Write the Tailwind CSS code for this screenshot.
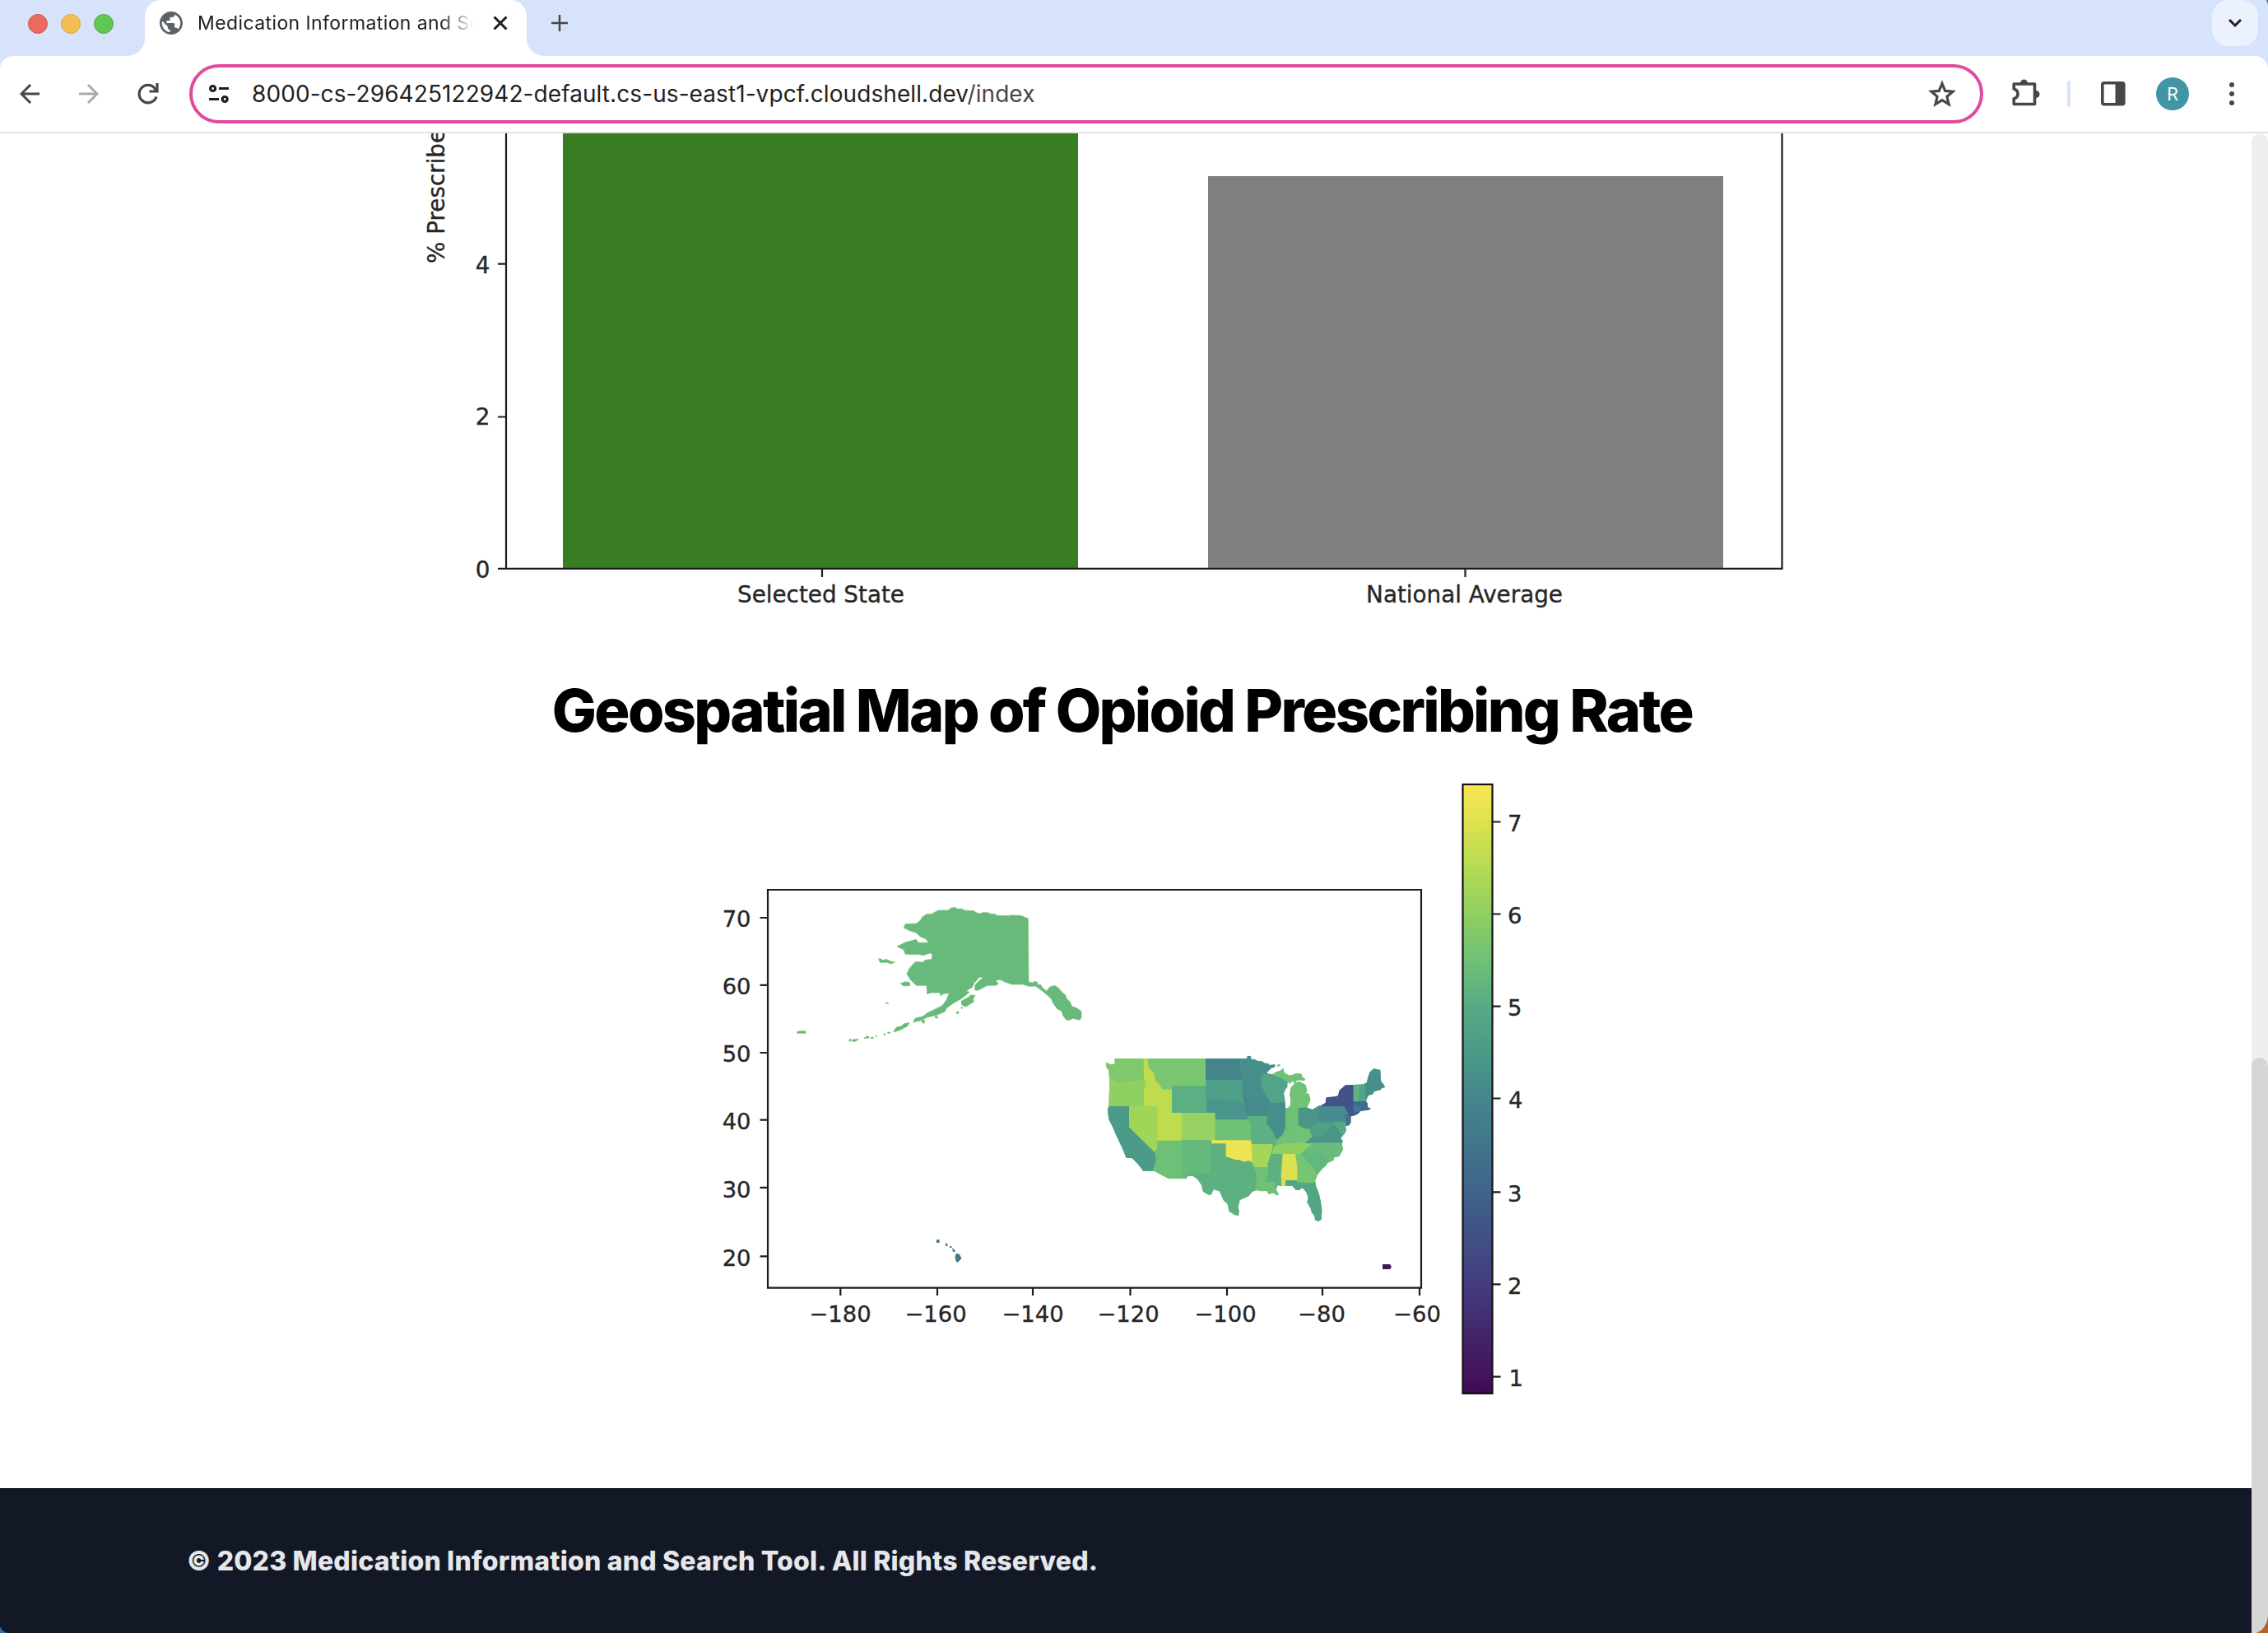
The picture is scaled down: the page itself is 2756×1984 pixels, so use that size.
<!DOCTYPE html>
<html lang="en">
<head>
<meta charset="utf-8">
<title>Medication Information and Search Tool</title>
<script src="https://cdn.jsdelivr.net/npm/@tailwindcss/browser@4"></script>
</head>
<body class="bg-white">
<div class="relative flex h-[1984px] w-[2756px] flex-col overflow-hidden bg-white font-['Inter',sans-serif]">

  <!-- Tab strip -->
  <div class="flex h-[68px] shrink-0 bg-[#d7e2fb]">
    <div class="flex w-[152px] items-start gap-4 pl-[34px] pt-[17px]">
      <span class="size-6 shrink-0 rounded-full border border-[#d5564c] bg-[#ec695e]"></span>
      <span class="size-6 shrink-0 rounded-full border border-[#dba53c] bg-[#f4bf50]"></span>
      <span class="size-6 shrink-0 rounded-full border border-[#52ab44] bg-[#62c655]"></span>
    </div>
    <svg class="h-[68px] w-6 shrink-0" viewBox="0 0 24 68"><path d="M0 68C14 68 24 60 24 46V20L24 68Z" fill="#fff"/></svg>
    <div class="flex w-[464px] shrink-0 items-start rounded-t-[20px] bg-white pl-[18px]">
      <svg class="mt-[14px] size-7 shrink-0" viewBox="2 2 20 20" fill="#5f6368"><path d="M12 2C6.48 2 2 6.48 2 12s4.48 10 10 10 10-4.48 10-10S17.52 2 12 2zm-1 17.93c-3.95-.49-7-3.85-7-7.93 0-.62.08-1.21.21-1.79L9 15v1c0 1.1.9 2 2 2v1.93zm6.9-2.54c-.26-.81-1-1.39-1.9-1.39h-1v-3c0-.55-.45-1-1-1H8v-2h2c.55 0 1-.45 1-1V7h2c1.1 0 2-.9 2-2v-.41c2.93 1.19 5 4.06 5 7.41 0 2.08-.8 3.97-2.1 5.39z"/></svg>
      <div class="ml-[18px] mt-3 w-[335px] overflow-hidden whitespace-nowrap text-[23px] leading-8 tracking-[0.400px] text-[#1f1f1f] [mask-image:linear-gradient(to_right,#000_88%,transparent)]">Medication Information and Search Tool</div>
      <svg class="ml-[24px] mt-[19px] size-[18px] shrink-0" viewBox="0 0 18 18" stroke="#1f1f1f" stroke-width="3"><path d="M1.5 1.5L16.5 16.5M16.5 1.5L1.5 16.5"/></svg>
    </div>
    <svg class="h-[68px] w-6 shrink-0" viewBox="0 0 24 68"><path d="M24 68C10 68 0 60 0 46V20V68Z" fill="#fff"/></svg>
    <svg class="ml-[6px] mt-[18px] size-5 shrink-0" viewBox="0 0 20 20" stroke="#474747" stroke-width="2.5"><path d="M0 10H20M10 0V20"/></svg>
    <div class="ml-auto mr-3 flex size-14 items-center justify-center rounded-[20px] bg-[#ecf2fd]">
      <svg class="size-5" viewBox="0 0 20 20" fill="none" stroke="#1f1f1f" stroke-width="3"><path d="M3 6L10 13L17 6"/></svg>
    </div>
  </div>

  <!-- Toolbar -->
  <div class="flex h-[94px] shrink-0 items-center border-b-2 border-[#e1e1e1] bg-[#d7e2fb]">
   <div class="flex h-full w-full items-center rounded-t-2xl bg-white">
    <svg class="ml-6 size-6 shrink-0" viewBox="0 0 24 24" fill="none" stroke="#474747" stroke-width="3"><path d="M24 12H3M13 1L2 12L13 23"/></svg>
    <svg class="ml-[48px] size-6 shrink-0" viewBox="0 0 24 24" fill="none" stroke="#ababab" stroke-width="3"><path d="M0 12H21M11 1L22 12L11 23"/></svg>
    <svg class="ml-[47px] size-[26px] shrink-0" viewBox="0 0 26 26" fill="none" stroke="#474747" stroke-width="3.2"><path d="M23 16.5A10.7 10.7 0 1 1 21 6.2L23 9"/><path d="M24 0V10H14.5"/></svg>
    <div class="ml-[37px] flex h-[72px] w-[2180px] shrink-0 items-center rounded-full border-4 border-[#e04b9d] bg-white pl-5">
      <svg class="size-6 shrink-0" viewBox="0 0 24 24" fill="none" stroke="#1f1f1f" stroke-width="3.2"><circle cx="4.6" cy="5.5" r="3"/><path d="M12 5.5H24M0 18.5H12"/><circle cx="19.2" cy="18.5" r="3"/></svg>
      <div class="ml-[28px] whitespace-nowrap text-[28px] leading-10 tracking-[0.080px] text-[#1f1f1f]">8000-cs-296425122942-default.cs-us-east1-vpcf.cloudshell.dev<span class="text-[#474747]">/index</span></div>
      <svg class="ml-auto mr-[28px] size-9 shrink-0" viewBox="0 0 36 36" fill="none" stroke="#474747" stroke-width="3.2"><path d="M18 5.5L21.7 14.4L31 15.2L23.9 21.4L26.1 30.6L18 25.7L9.9 30.6L12.1 21.4L5 15.2L14.3 14.4Z"/></svg>
    </div>
    <svg class="ml-[34px] size-9 shrink-0" viewBox="0 0 36 36"><path d="M4 6H28.5V30.5H3.2V24C6.5 23 8 21 8 18S6.500 13 3.200 12V6Z" fill="none" stroke="#474747" stroke-width="3.6" stroke-linejoin="round"/><path d="M11 5A4.500 4.500 0 0 1 20 5ZM30 14A4.500 4.500 0 0 1 30 23Z" fill="#474747"/></svg>
    <div class="ml-[32px] h-8 w-1 rounded-full bg-[#d7e2fb]"></div>
    <svg class="ml-[37px] h-[30px] w-[30px] shrink-0" viewBox="0 0 30 30"><rect x="1.800" y="1.800" width="26" height="26" rx="2" fill="none" stroke="#474747" stroke-width="3.600"/><path d="M17.500 1H28V29H17.500Z" fill="#474747"/></svg>
    <div class="ml-[37px] flex size-10 items-center justify-center rounded-full bg-[#4295a5] font-['Roboto',sans-serif] text-[22px] text-white">R</div>
    <div class="ml-[49px] flex flex-col gap-[5px]"><span class="size-1.5 rounded-full bg-[#474747]"></span><span class="size-1.5 rounded-full bg-[#474747]"></span><span class="size-1.5 rounded-full bg-[#474747]"></span></div>
   </div>
  </div>

  <!-- Page -->
  <div class="flex min-h-0 flex-1">
    <div class="flex w-[2736px] shrink-0 flex-col items-center">
      <!-- Prescribing rate bar chart -->
      <svg class="h-[661px] w-[1736px] shrink-0 font-['DejaVu_Sans',sans-serif] text-[27.8px]" viewBox="500 162 1736 661" fill="#262626">
        <rect x="684" y="100" width="626" height="591" fill="#387d22"/>
        <rect x="1468" y="214" width="626" height="477" fill="#808080"/>
        <path d="M615 100V690.800H2165.500V100M605 320.700H615M605 506.500H615M605 690.800H615M999 691V701M1780.500 691V701" fill="none" stroke="#1c1c1c" stroke-width="2.200"/>
        <g stroke="#262626" stroke-width=".35">
          <g text-anchor="end"><text x="595.500" y="331.500">4</text><text x="595.500" y="516">2</text><text x="595.500" y="701.500">0</text></g>
          <g text-anchor="middle"><text x="997.500" y="731.500">Selected State</text><text x="1779.500" y="731.500">National Average</text></g>
          <text transform="translate(540 320) rotate(-90)">% Prescribed</text>
        </g>
      </svg>

      <h2 class="h-20 shrink-0 whitespace-nowrap pr-[9px] text-[72px] font-extrabold leading-[80px] tracking-[-2.700px] text-black">Geospatial Map of Opioid Prescribing Rate</h2>

      <!-- Choropleth map -->
      <svg class="h-[905px] w-[1000px] shrink-0 font-['DejaVu_Sans',sans-serif] text-[27.4px]" viewBox="868 903 1000 905" fill="#262626">
        <defs>
          <linearGradient id="viridis" x1="0" y1="0" x2="0" y2="1">
            <stop offset="0" stop-color="#fae655"/><stop offset=".062" stop-color="#dde24e"/><stop offset=".137" stop-color="#b5da53"/><stop offset=".213" stop-color="#8fcf61"/><stop offset=".289" stop-color="#6fc077"/><stop offset=".365" stop-color="#57ab84"/><stop offset=".44" stop-color="#4b9a89"/><stop offset=".516" stop-color="#44868c"/><stop offset=".67" stop-color="#3f638b"/><stop offset=".821" stop-color="#433c7e"/><stop offset=".973" stop-color="#43125a"/><stop offset="1" stop-color="#3f0a50"/>
          </linearGradient>
          <clipPath id="lower48"><path d="M12 62L28 70 44 68V48H525L528 38H540L541 50 555 52 565 57 580 58 590 65 603 66 608 72 628 70 628 78 615 84 600 97 600 103 618 106 635 96 645 94 658 84 662 100 680 110 690 108 705 103 725 104 728 116 738 122 735 129 718 127 704 129 704 137 697 137 695 130 680 140 675 133 672 145 675 148 665 162 660 175 664 200 666 228H675L684 220 685 200 682 178 685 155 695 145 700 138 712 132 722 134 740 145 745 165 740 175 735 182 745 173 753 180 757 200 750 215 745 228 765 234 785 222 800 217 812 210 815 190 845 187 858 184 862 165 885 145 915 144 950 142 963 135 966 120 973 98 988 85 1012 90 1014 130 1022 140 1030 152 1018 156 1012 163 990 168 985 178 970 182 962 195 960 205 966 212 966 226 978 230 968 236 955 238 940 240 932 250 922 256 905 258 905 280 898 292 885 295 888 310 880 325 875 330 867 338 875 348 872 360 876 380 862 405 845 407 840 420 820 428 812 440 800 450 783 472 774 495 778 515 788 540 795 570 799 600 797 635 785 642 774 637 772 622 762 610 758 595 745 572 749 555 742 535 728 520 715 528 705 528 690 512 665 512 652 514 638 510 632 525 642 545 630 545 625 538 605 542 598 530 580 532 560 528 545 535 532 550 500 565 494 592 498 605 495 622 480 618 460 605 455 580 440 565 425 532 405 526 395 545 385 545 365 533 360 510 345 488 328 476 308 478 305 486H240L210 470 188 458H148L130 435 108 412 86 410 70 372 50 330 35 295 22 270 18 235 22 220 25 130 22 90 14 82Z"/></clipPath>
        </defs>

        <!-- Alaska -->
        <g transform="translate(1050 1080) scale(.33333)" fill="#67ba7b" stroke="#74c272" stroke-width="2">
          <path d="M320 68L335 68 340 73 360 73 362 78 400 80 412 88 425 90 432 86 453 86 458 91 480 92 483 97 525 98 535 96 570 97 598 108 600 340 618 342 620 337 632 340 632 348 645 350 650 360 665 372 678 357 695 352 710 362 720 375 735 388 738 400 750 410 758 428 775 434 792 446 792 470 785 478 760 472 750 478 738 478 725 462 720 445 705 438 690 418 682 400 665 385 650 372 625 354 600 355 580 348 540 348 515 340 495 330 480 335 490 345 480 352 450 352 430 362 415 370 403 368 405 350 418 336 435 321 420 322 400 345 395 358 372 372 384 376 370 388 355 400 328 415 300 435 295 447 265 460 230 468 205 480 178 486 186 472 215 464 230 452 255 440 285 425 300 405 310 380 290 382 280 389 275 378 245 378 230 383 228 352 190 352 170 332 156 310 165 290 180 272 190 265 215 268 220 260 247 256 248 236 240 234 215 242 205 239 150 238 145 222 120 210 150 195 190 184 197 196 235 196 225 182 205 174 190 160 168 153 145 142 150 128 190 126 205 115 212 103 228 92 245 92 270 78 305 78Z"/>
          <path d="M355 408L380 395 388 387 405 388 398 400 400 412 385 420 370 430 356 422ZM53 254L64 256 68 260 80 256 98 264 112 267 96 274 88 268 58 268ZM132 345L150 338 167 341 167 353 145 354ZM79 415H88V418H79ZM108 518L118 504 136 500 144 492 165 487 158 500 140 510 128 516 110 521ZM354 431H358V436H354ZM337 447H345V454H337ZM210 478H220V489H212ZM258 464H268V471H260ZM86 522H95V526H86ZM72 528H78V532H72ZM42 535H47V538H42ZM25 541H34V545H25ZM0 542L8 541 10 536 17 538 17 544H0ZM-54 548H-48V555H-54ZM-44 550L-36 548-20 548-32 556H-42ZM-244 520L-232 518-213 518V526H-244Z"/>
        </g>

        <!-- Contiguous states -->
        <g transform="translate(1340 1270) scale(.33333)">
          <path d="M636 71L648 68 646 75 637 79Z" fill="#72c276"/>
          <g clip-path="url(#lower48)">
            <path d="M0 30H1050V660H0Z" fill="#5db180"/>
            <path d="M0 40H152V126L110 128 90 133 50 133 40 122 0 115Z" fill="#7fc96c"/>
            <path d="M0 115L40 122 50 133 90 133 110 128 150 124 157 135 150 160V224H0Z" fill="#90d062"/>
            <path d="M0 222H96V298L194 398 190 425 195 460H0Z" fill="#4b9b88"/>
            <path d="M96 222H200V372L190 390 96 298Z" fill="#a1d558"/>
            <path d="M149 48H164L168 80 190 105 192 130 205 137 218 160H253V248H199V222H150V160L157 135 150 124Z" fill="#bfdb4e"/>
            <path d="M164 40H376V149H252V160H218L205 137 192 130 190 105 168 80Z" fill="#7ac671"/>
            <path d="M252 148H378V247H252Z" fill="#5bb083"/>
            <path d="M199 222H252V246H288V348H199Z" fill="#bfdb4e"/>
            <path d="M288 246H411V347H288Z" fill="#97d262"/>
            <path d="M199 347H289V490H240L180 462 195 420 190 390 199 372Z" fill="#6fc077"/>
            <path d="M288 346H392V466H308V490H288Z" fill="#65b97d"/>
            <path d="M375 40H500L508 127H375Z" fill="#44858c"/>
            <path d="M376 126H509V212L490 200 376 198Z" fill="#4fa089"/>
            <path d="M378 197L490 200 515 212 531 271H410V246H378Z" fill="#4a958b"/>
            <path d="M410 271H530L541 290V347H410Z" fill="#6fc177"/>
            <path d="M500 30H640V80L600 103 577 120 577 145 603 170 605 185H508V126Z" fill="#478f8c"/>
            <path d="M508 184H600L612 210 612 232 598 259H525L513 210Z" fill="#478a8c"/>
            <path d="M525 258H598L605 285 625 318 637 345 630 370H618V361H541V290Z" fill="#5cb083"/>
            <path d="M541 360H619L620 372 602 430V445H552L545 426Z" fill="#a4d65a"/>
            <path d="M552 444H602L604 465 594 497H626L630 520 650 550H555L558 510 562 480Z" fill="#6fc177"/>
            <path d="M602 430L620 396H656L650 470 652 518H628V497H594L604 465Z" fill="#5db180"/>
            <path d="M577 112L600 100 650 120 675 134 672 230 666 210H612L600 190 577 148Z" fill="#51a389"/>
            <path d="M600 100L612 80H745V138H675L660 122ZM680 128H760V232H680Z" fill="#72c276"/>
            <path d="M604 209H666V300L655 325 640 345 630 338 620 315 598 285 600 258 612 232Z" fill="#478f8c"/>
            <path d="M666 228H714V292L690 315 658 330 666 300Z" fill="#6ec079"/>
            <path d="M713 228L745 226 790 212V270L755 305 735 303 713 292Z" fill="#499689"/>
            <path d="M625 370L640 340 658 326 690 315 713 292 735 303 755 305 762 332 740 356 640 365Z" fill="#72c276"/>
            <path d="M625 368L652 358 770 354 722 396H614Z" fill="#90d062"/>
            <path d="M738 357L765 333 755 305 790 270 850 275 870 305 880 357Z" fill="#499689"/>
            <path d="M790 278H850L828 300 810 320 785 335H763L755 305 772 288Z" fill="#4da187"/>
            <path d="M840 280H890V325H868L858 300 840 290Z" fill="#56a985"/>
            <path d="M787 218H880L893 245 885 280H789Z" fill="#478c8e"/>
            <path d="M883 250H905V296H888Z" fill="#42718e"/>
            <path d="M798 222L810 180 860 140H914L916 243 945 240 905 262 893 247 880 222Z" fill="#41538a"/>
            <path d="M914 140H946L935 165 932 205H914Z" fill="#5fb380"/>
            <path d="M945 140H956L962 205H932L935 165Z" fill="#51a389"/>
            <path d="M955 145L960 80H1040V175L960 200Z" fill="#478f8c"/>
            <path d="M914 204H985V240H940L914 242Z" fill="#42698d"/>
            <path d="M914 222H942V240L916 246Z" fill="#43788e"/>
            <path d="M724 392L770 355H885V420L825 432 810 400 790 393Z" fill="#69bc7a"/>
            <path d="M724 392H792L812 402 830 430 785 475 760 438Z" fill="#63b87e"/>
            <path d="M702 396H724L760 438 785 475 772 505 708 498Z" fill="#76c572"/>
            <path d="M666 492H708L712 500 765 503 774 495 820 520V660H730L740 535 660 530Z" fill="#51a683"/>
            <path d="M656 396H702L709 440V491L666 492V516H652L650 470Z" fill="#dce14f"/>
            <path d="M396 346H541L546 426 530 420 518 425 497 418 480 416 449 405V358H396Z" fill="#ece452"/>
          </g>
        </g>

        <!-- Hawaii and Puerto Rico -->
        <path d="M1138 1506H1141.500V1510H1138ZM1148.500 1510.500H1150.500L1152 1514H1149.500ZM1154 1514H1156.500V1516H1154ZM1157 1516L1160.500 1519V1521H1158ZM1162 1522.500L1166 1524 1168.500 1529 1163.500 1534 1161.500 1532 1160.500 1527Z" fill="#42778e"/>
        <path d="M1680 1536H1689L1691 1539 1689 1542H1680Z" fill="#40185f"/>

        <path d="M933 1081H1727V1564.600H933ZM923.500 1115H933M923.500 1196.800H933M923.500 1279H933M923.500 1360.700H933M923.500 1442.900H933M923.500 1526.400H933M1021.300 1565V1574M1139 1565V1574M1255 1565V1574M1373.500 1565V1574M1491 1565V1574M1607 1565V1574M1725 1565V1574" fill="none" stroke="#1c1c1c" stroke-width="2.200"/>
        <g stroke="#262626" stroke-width=".35">
          <g text-anchor="end"><text x="912.500" y="1125.500">70</text><text x="912.500" y="1207.500">60</text><text x="912.500" y="1289.500">50</text><text x="912.500" y="1371.500">40</text><text x="912.500" y="1455">30</text><text x="912.500" y="1537.500">20</text></g>
          <g text-anchor="middle"><text x="1021" y="1606">−180</text><text x="1137" y="1606">−160</text><text x="1255" y="1606">−140</text><text x="1371" y="1606">−120</text><text x="1489" y="1606">−100</text><text x="1606" y="1606">−80</text><text x="1722" y="1606">−60</text></g>
        </g>

        <rect x="1777.500" y="953" width="36" height="740" fill="url(#viridis)" stroke="#141414" stroke-width="2.200"/>
        <path d="M1814 998.500H1823.500M1814 1110.500H1823.500M1814 1222.700H1823.500M1814 1334.500H1823.500M1814 1448.300H1823.500M1814 1560.300H1823.500M1814 1672.600H1823.500" stroke="#1c1c1c" stroke-width="2.200"/>
        <g stroke="#262626" stroke-width=".35"><text x="1832" y="1009.500">7</text><text x="1832" y="1121.500">6</text><text x="1832" y="1233.500">5</text><text x="1833" y="1345.500">4</text><text x="1832" y="1459.500">3</text><text x="1832" y="1571.500">2</text><text x="1833.500" y="1683.500">1</text></g>
      </svg>

      <footer class="flex h-44 w-full shrink-0 items-center bg-[#121826] pl-[227px] pt-0.5">
        <p class="whitespace-nowrap text-[32px] font-extrabold leading-[48px] tracking-[0.190px] text-[#e5e7eb]">© 2023 Medication Information and Search Tool. All Rights Reserved.</p>
      </footer>
    </div>
    <div class="flex w-5 flex-col justify-end rounded-t-full bg-[#efefef]">
      <div class="h-[699px] rounded-t-[10px] bg-[#d6d6d6]"></div>
    </div>
  </div>

  <!-- Desktop showing past the window's rounded corners -->
  <svg class="absolute bottom-0 left-0 size-3" viewBox="0 0 12 12"><path d="M0 4Q2 10 9 12H0Z" fill="#3b6ba5"/></svg>
  <svg class="absolute bottom-0 right-0 h-5 w-4" viewBox="0 0 16 20"><path d="M16 0Q14 15 2 20H16Z" fill="#b4622c"/></svg>
  <svg class="absolute right-0 top-0 size-2" viewBox="0 0 8 8"><path d="M6 0H8V8Q8 3 6 0Z" fill="#3d5a80"/></svg>
</div>
</body>
</html>
